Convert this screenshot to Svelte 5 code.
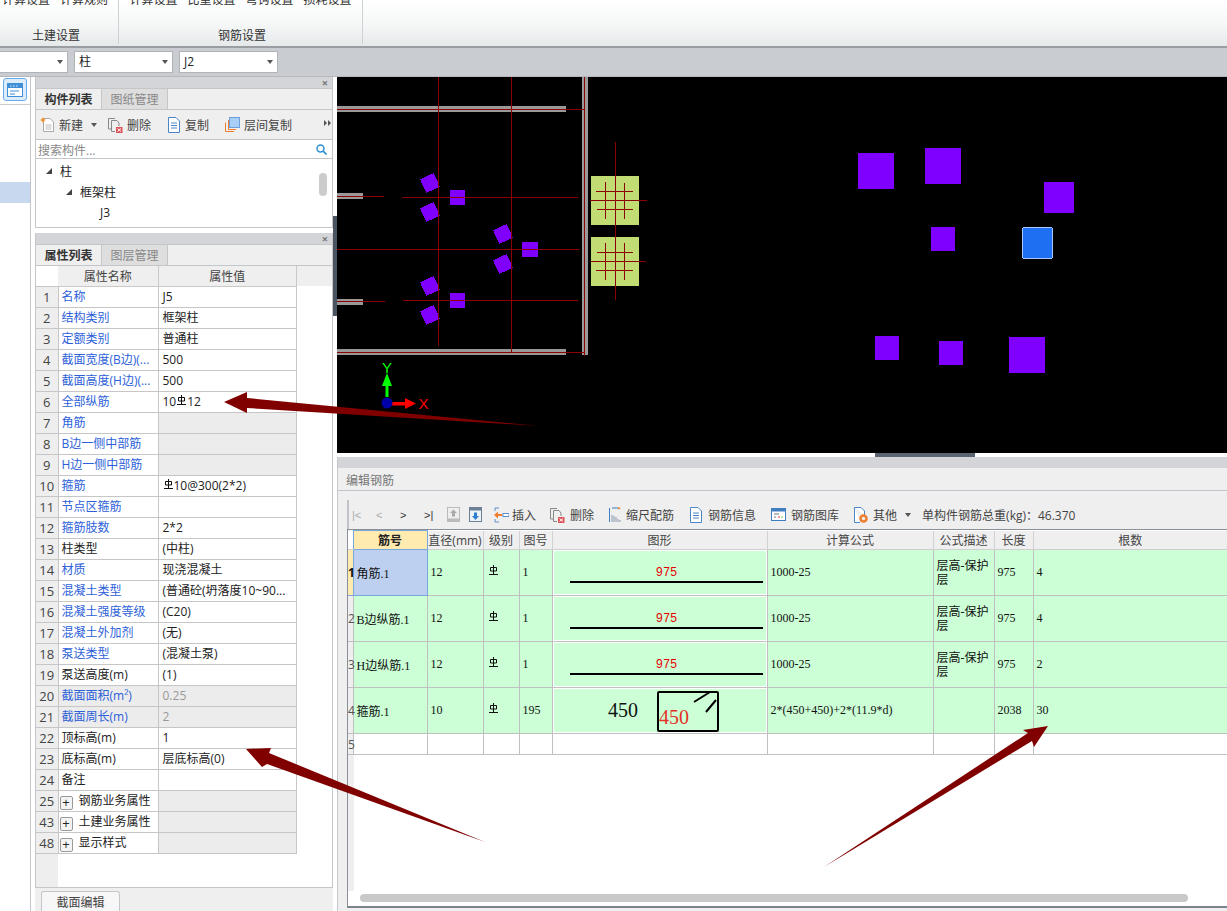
<script lang="ts">
  const propRows = [
    { n: 1, name: "名称", val: "J5", link: true },
    { n: 2, name: "结构类别", val: "框架柱", link: true },
    { n: 3, name: "定额类别", val: "普通柱", link: true },
    { n: 4, name: "截面宽度(B边)(...", val: "500", link: true },
    { n: 5, name: "截面高度(H边)(...", val: "500", link: true },
    { n: 6, name: "全部纵筋", val: "10", sym: true, after: "12", link: true },
    { n: 7, name: "角筋", val: "", link: true, grey: true },
    { n: 8, name: "B边一侧中部筋", val: "", link: true, grey: true },
    { n: 9, name: "H边一侧中部筋", val: "", link: true, grey: true },
    { n: 10, name: "箍筋", val: "", sym: true, after: "10@300(2*2)", link: true },
    { n: 11, name: "节点区箍筋", val: "", link: true },
    { n: 12, name: "箍筋肢数", val: "2*2", link: true },
    { n: 13, name: "柱类型", val: "(中柱)" },
    { n: 14, name: "材质", val: "现浇混凝土", link: true },
    { n: 15, name: "混凝土类型", val: "(普通砼(坍落度10~90...", link: true },
    { n: 16, name: "混凝土强度等级", val: "(C20)", link: true },
    { n: 17, name: "混凝土外加剂", val: "(无)", link: true },
    { n: 18, name: "泵送类型", val: "(混凝土泵)", link: true },
    { n: 19, name: "泵送高度(m)", val: "(1)" },
    { n: 20, name: "截面面积(m²)", val: "0.25", link: true, locked: true },
    { n: 21, name: "截面周长(m)", val: "2", link: true, locked: true },
    { n: 22, name: "顶标高(m)", val: "1" },
    { n: 23, name: "底标高(m)", val: "层底标高(0)" },
    { n: 24, name: "备注", val: "" },
    { n: 25, name: "钢筋业务属性", val: "", group: true, grey: true },
    { n: 43, name: "土建业务属性", val: "", group: true, grey: true },
    { n: 48, name: "显示样式", val: "", group: true, grey: true },
  ];

  const rebars = [
    { no: 1, name: "角筋.1", d: 12, code: 1, formula: "1000-25", desc: "层高-保护层", len: 975, count: 4 },
    { no: 2, name: "B边纵筋.1", d: 12, code: 1, formula: "1000-25", desc: "层高-保护层", len: 975, count: 4 },
    { no: 3, name: "H边纵筋.1", d: 12, code: 1, formula: "1000-25", desc: "层高-保护层", len: 975, count: 2 },
    { no: 4, name: "箍筋.1", d: 10, code: 195, formula: "2*(450+450)+2*(11.9*d)", desc: "", len: 2038, count: 30 },
  ];

  // drawing coordinates are relative to the canvas corner
  const columns = [[113, 113, 15, 15], [185, 165, 16, 15], [113, 216, 15, 15]];
  const tilted = [[93, 106], [93, 135], [166, 157], [166, 187], [93, 209], [93, 238]];
  const farColumns = [
    [521, 76, 36, 36], [588, 71, 36, 36], [707, 105, 30, 31], [594, 150, 24, 24],
    [538, 259, 24, 24], [602, 264, 24, 24], [672, 260, 36, 36],
  ];
  const redLines = [
    [0, 32, 247, 32], [101, 0, 101, 269], [174, 0, 174, 275], [65, 120, 241, 120],
    [0, 172, 242, 172], [66, 223, 241, 223], [0, 119, 47, 119], [0, 224, 48, 224],
    [0, 275, 247, 275], [247, 0, 247, 279], [278, 65, 278, 223], [253, 123, 310, 123], [254, 184, 309, 184],
    [259, 114, 296, 114], [260, 132, 296, 132], [268, 105, 268, 142], [287, 106, 287, 142],
    [260, 175, 296, 175], [259, 193, 296, 193], [268, 166, 268, 203], [287, 166, 287, 203],
  ];
</script>

{#snippet rebarSym()}
  <svg class="sym" width="9" height="10" viewBox="0 0 9 10">
    <path d="M4.5 0V9M1.5 2.5H7.5V6H1.5ZM0 9.5H9" fill="none" stroke="#111" stroke-width="1" />
  </svg>
{/snippet}

{#snippet caret()}
  <svg class="caret" width="6" height="4" viewBox="0 0 6 4"><path d="M0 0H6L3 4Z" fill="#555" /></svg>
{/snippet}

{#snippet docDelete()}
  <svg width="15" height="16" viewBox="0 0 15 16">
    <path d="M.5 1.5H7M.5 1.5V12H3" fill="none" stroke="#888" />
    <path d="M3.5 3.5H9L11 6V9M3.5 3.5V14.5H7" fill="none" stroke="#888" />
    <rect x="8" y="10" width="6.5" height="6" fill="#e0525a" />
    <path d="M9.5 11.5L13 14.5M13 11.5L9.5 14.5" stroke="#fff" />
  </svg>
{/snippet}

{#snippet docBlue()}
  <svg width="14" height="16" viewBox="0 0 14 16">
    <path d="M1.5 .5H9L12.5 4V15.5H1.5Z" fill="#fff" stroke="#4a86c8" />
    <path d="M4 6H10M4 8.5H10M4 11H10" stroke="#4a86c8" />
  </svg>
{/snippet}

<div class="app">
  <header class="ribbon">
    <div class="rgroup first">
      <div class="ritems"><span>计算设置</span><span>计算规则</span></div>
      <div class="rlabel">土建设置</div>
    </div>
    <div class="rgroup second">
      <div class="ritems"><span>计算设置</span><span>比重设置</span><span>弯钩设置</span><span>损耗设置</span></div>
      <div class="rlabel">钢筋设置</div>
    </div>
  </header>

  <div class="combobar">
    <div class="combo c0"><span></span>{@render caret()}</div>
    <div class="combo"><span>柱</span>{@render caret()}</div>
    <div class="combo"><span>J2</span>{@render caret()}</div>
  </div>

  <div class="main">
    <aside class="rail">
      <div class="rail-top">
        <div class="rail-btn">
          <svg width="16" height="14" viewBox="0 0 16 14">
            <rect x=".5" y=".5" width="15" height="13" fill="#fff" stroke="#3f8fd8" />
            <rect x="1" y="1" width="14" height="4" fill="#3f8fd8" />
            <path d="M3 3H4.5M6 3H7.5M9 3H10.5" stroke="#dcecfa" />
            <path d="M3 8H12M3 11H8" stroke="#3f8fd8" />
          </svg>
        </div>
      </div>
      <div class="rail-sel"></div>
    </aside>

    <div class="side">
      <section class="panel list-panel">
        <div class="panel-bar"><span class="x">×</span></div>
        <div class="tabs">
          <div class="tab on">构件列表</div>
          <div class="tab">图纸管理</div>
        </div>
        <div class="tools">
          <span class="tool new">
            <svg width="14" height="15" viewBox="0 0 14 15">
              <path d="M3.5 1.5H10L13.5 5V14.5H3.5Z" fill="#fff" stroke="#aaa" />
              <path d="M5.5 8H11.5M5.5 10H11.5M5.5 12H11.5" stroke="#bbb" />
              <path d="M3 0L4 2L6 3L4 4L3 6L2 4L0 3L2 2Z" fill="#f0902a" />
            </svg>
            新建 {@render caret()}
          </span>
          <span class="tool">{@render docDelete()}删除</span>
          <span class="tool">{@render docBlue()}复制</span>
          <span class="tool layer">
            <svg width="15" height="15" viewBox="0 0 15 15">
              <rect x="4.5" y=".5" width="10" height="10" fill="#a9cdf5" stroke="#6ba0de" />
              <path d="M3.5 3V12.5H11M.5 5.5V14.5H9" fill="none" stroke="#ee7d2e" />
            </svg>
            层间复制
          </span>
          <span class="more">
            <svg width="7" height="6" viewBox="0 0 7 6"><path d="M0 0L3 3L0 6ZM4 0L7 3L4 6Z" fill="#555" /></svg>
          </span>
        </div>
        <div class="search">
          <span>搜索构件...</span>
          <svg width="11" height="11" viewBox="0 0 11 11">
            <circle cx="4.5" cy="4.5" r="3.5" fill="none" stroke="#2f8fd0" stroke-width="1.5" />
            <path d="M7 7L10.5 10.5" stroke="#2f8fd0" stroke-width="1.7" />
          </svg>
        </div>
        <div class="tree">
          <div class="node lv0"><i class="tri"></i>柱</div>
          <div class="node lv1"><i class="tri"></i>框架柱</div>
          <div class="node lv2">J3</div>
          <div class="thumb"></div>
        </div>
      </section>

      <section class="panel prop-panel">
        <div class="panel-bar"><span class="x">×</span></div>
        <div class="tabs">
          <div class="tab on">属性列表</div>
          <div class="tab">图层管理</div>
        </div>
        <div class="prop-body">
          <table class="props">
            <colgroup><col class="pn" /><col class="pk" /><col class="pv" /></colgroup>
            <thead>
              <tr><th class="blank"></th><th>属性名称</th><th>属性值</th></tr>
            </thead>
            <tbody>
              {#each propRows as r}
                <tr class:locked={r.locked}>
                  <td class="num">{r.n}</td>
                  <td class="key" class:link={r.link}>
                    {#if r.group}<span class="plus">+</span><span class="gname">{r.name}</span>{:else}{r.name}{/if}
                  </td>
                  <td class="val" class:grey={r.grey}>{r.val}{#if r.sym}{@render rebarSym()}{r.after}{/if}</td>
                </tr>
              {/each}
            </tbody>
          </table>
        </div>
        <div class="side-foot"><div class="foot-tab">截面编辑</div></div>
      </section>
    </div>

    <div class="gutter"><div class="grip"></div></div>

    <div class="work">
      <div class="canvas">
        <svg width="890" height="376" viewBox="0 0 890 376" shape-rendering="crispEdges">
          <rect x="0" y="29" width="229" height="6" fill="#999" />
          <rect x="0" y="116" width="26" height="6" fill="#999" />
          <rect x="0" y="222" width="26" height="6" fill="#999" />
          <rect x="0" y="272" width="229" height="6" fill="#999" />
          <rect x="245" y="0" width="6" height="278" fill="#999" />
          <rect x="254" y="99" width="48" height="49" fill="#c1dc72" />
          <rect x="254" y="160" width="48" height="49" fill="#c1dc72" />
          {#each columns as c}
            <rect x={c[0]} y={c[1]} width={c[2]} height={c[3]} fill="#8000ff" />
          {/each}
          {#each tilted as t}
            <rect x={t[0] - 7.5} y={t[1] - 7.5} width="15" height="15" fill="#8000ff" transform="rotate(-25 {t[0]} {t[1]})" />
          {/each}
          {#each farColumns as c}
            <rect x={c[0]} y={c[1]} width={c[2]} height={c[3]} fill="#8000ff" />
          {/each}
          <rect x="685.5" y="150.5" width="30" height="31" rx="2" fill="#1f6ff2" stroke="#a8c8f8" />
          {#each redLines as l}
            <line x1={l[0]} y1={l[1]} x2={l[2]} y2={l[3]} stroke="#8c0000" />
          {/each}
          <g shape-rendering="auto">
            <path d="M48.5 320V309H45L50 296L55 309H51.5V320Z" fill="#00ff00" />
            <path d="M54 325V328.5H68V332L79 326.500L68 321V325Z" fill="#ff0000" />
            <circle cx="50" cy="326" r="5.500" fill="#0000a8" />
            <text x="50" y="296" class="axis" fill="#00ff00" text-anchor="middle">Y</text>
            <text x="86.500" y="332" class="axis" fill="#ff0000" text-anchor="middle">X</text>
          </g>
        </svg>
      </div>

      <div class="editor">
        <div class="splitter"><div class="split-tab"></div></div>
        <div class="editor-title">编辑钢筋</div>
        <div class="editor-body">
          <div class="etools">
            <span class="nav off">|&lt;</span>
            <span class="nav off">&lt;</span>
            <span class="nav">&gt;</span>
            <span class="nav">&gt;|</span>
            <svg class="ic-up" width="13" height="15" viewBox="0 0 13 15">
              <rect width="13" height="15" fill="#bbb" />
              <rect x="1" y="1" width="11" height="10.500" fill="#eee" />
              <path d="M6.500 2.500L10 6H8V9.500H5V6H3Z" fill="#aaa" />
            </svg>
            <svg class="ic-down" width="13" height="15" viewBox="0 0 13 15">
              <rect width="13" height="15" fill="#6b7f96" />
              <rect x="1" y="3.500" width="11" height="10.500" fill="#eef3f8" />
              <path d="M6.500 13L3 9H5V5.500H8V9H10Z" fill="#2f7fd0" />
            </svg>
            <span class="tool insert">
              <svg width="15" height="16" viewBox="0 0 15 16">
                <path d="M1 4V1H5M1 12V15H5" fill="none" stroke="#5a8fc8" />
                <path d="M0 8L4 4.500V7H8V9H4V11.500Z" fill="#ee7d2e" />
                <rect x="9" y="6.500" width="6" height="3" fill="#fff" stroke="#5a8fc8" />
              </svg>
              插入
            </span>
            <span class="tool">{@render docDelete()}删除</span>
            <span class="tool">
              <svg width="12" height="15" viewBox="0 0 12 15">
                <path d="M.5 1V15M3 1H9" stroke="#3f7fc0" fill="none" />
                <path d="M9 0V2.500L12 1.200Z" fill="#ee7d2e" />
                <path d="M3 8V15M5 9V15M7 10V15M9 12V15M11 13V15" stroke="#8899aa" />
              </svg>
              缩尺配筋
            </span>
            <span class="tool">{@render docBlue()}钢筋信息</span>
            <span class="tool">
              <svg width="15" height="13" viewBox="0 0 15 13">
                <rect x=".5" y=".5" width="14" height="12" fill="#fff" stroke="#3f7fc0" />
                <rect x="1" y="1" width="13" height="2.500" fill="#3f7fc0" />
                <path d="M3 6H8M3 9H5" stroke="#777" />
                <path d="M7 9H9" stroke="#e33" />
                <path d="M10 9H12" stroke="#7c3" />
              </svg>
              钢筋图库
            </span>
            <span class="tool">
              <svg width="14" height="16" viewBox="0 0 14 16">
                <path d="M.5 .5H7L10.500 4V8M.5 .5V15.500H6" fill="#fff" stroke="#4a86c8" />
                <circle cx="9.500" cy="11.500" r="3" fill="none" stroke="#ee7d2e" stroke-width="2.500" />
              </svg>
              其他 {@render caret()}
            </span>
            <span class="total">单构件钢筋总重(kg)：46.370</span>
          </div>

          <div class="grid-wrap">
            <table class="rebar">
              <colgroup>
                <col class="c-h" /><col class="c-name" /><col class="c-d" /><col class="c-lv" /><col class="c-code" />
                <col class="c-shape" /><col class="c-formula" /><col class="c-desc" /><col class="c-len" /><col />
              </colgroup>
              <thead>
                <tr>
                  <th class="hcorner"></th><th class="sel-h">筋号</th><th>直径(mm)</th><th>级别</th><th>图号</th>
                  <th>图形</th><th>计算公式</th><th>公式描述</th><th>长度</th><th>根数</th>
                </tr>
              </thead>
              <tbody>
                {#each rebars as b, i}
                  <tr class="data">
                    <td class="rownum" class:cur={i === 0}><span>{b.no}</span></td>
                    <td class="name" class:cell-sel={i === 0}>{b.name}</td>
                    <td>{b.d}</td>
                    <td class="lv">{@render rebarSym()}</td>
                    <td>{b.code}</td>
                    <td class="shape">
                      {#if b.code === 1}
                        <div class="bar"><span>975</span><i></i></div>
                      {:else}
                        <svg width="214" height="44" viewBox="0 0 214 44">
                          <text x="70" y="28" class="big" fill="#111" text-anchor="middle">450</text>
                          <rect x="105" y="3" width="60" height="39" rx="1" fill="none" stroke="#000" stroke-width="2" />
                          <path d="M141 13L157 3M153 23L163 11" stroke="#000" stroke-width="2" />
                          <text x="121" y="35" class="big" fill="#e43127" text-anchor="middle">450</text>
                        </svg>
                      {/if}
                    </td>
                    <td>{b.formula}</td>
                    <td class="desc">{b.desc}</td>
                    <td>{b.len}</td>
                    <td>{b.count}</td>
                  </tr>
                {/each}
                <tr class="empty">
                  <td class="rownum"><span>5</span></td><td></td><td></td><td></td><td></td><td></td><td></td><td></td><td></td><td></td>
                </tr>
              </tbody>
            </table>
            <div class="hscroll"></div>
          </div>
        </div>
      </div>
    </div>
  </div>

  <svg class="arrows" width="1227" height="911" viewBox="0 0 1227 911">
    <path d="M224 402L247 392L247 398L540 426L247 408L247 413Z" fill="#800000" />
    <path d="M246 749L271 748L269 753L485 842L267 764L262 767Z" fill="#800000" />
    <path d="M1048 726L1023 730L1028 733L824 867L1032 741L1034 747Z" fill="#800000" />
  </svg>
</div>

<style>
  :global(body) {
    margin: 0;
    background: #fff;
  }

  .app {
    position: relative;
    width: 1227px;
    height: 911px;
    overflow: hidden;
    display: flex;
    flex-direction: column;
    font-family: "Open Sans", "Noto Sans CJK SC", sans-serif;
    font-size: 12px;
    color: #222;
  }

  /* ribbon */
  .ribbon {
    height: 46px;
    flex: none;
    display: flex;
    background: linear-gradient(#fff, #f6f8f8 50%, #e6e9ea);
    border-bottom: 2px solid #9a9da2;
  }

  .rgroup {
    height: 44px;
    display: flex;
    flex-direction: column;
    align-items: center;
    box-sizing: border-box;
    border-right: 1px solid #cfd2d5;
    overflow: hidden;
  }

  .rgroup.first {
    width: 119px;
  }

  .rgroup.first .ritems {
    align-self: flex-start;
    padding-left: 2px;
  }

  .rgroup.first .rlabel {
    margin-right: 6px;
  }

  .rgroup.second {
    width: 244px;
  }

  .rgroup.second .rlabel {
    margin-left: 3px;
  }

  .ritems {
    display: flex;
    gap: 10px;
    height: 12px;
    line-height: 0;
    color: #333;
  }

  .rlabel {
    margin-top: 17px;
    line-height: 16px;
    color: #333;
  }

  .combobar {
    height: 29px;
    flex: none;
    display: flex;
    align-items: flex-start;
    gap: 6px;
    padding-top: 3px;
    box-sizing: border-box;
    background: #c9ccd1;
    border-bottom: 1px solid #b5b8bc;
  }

  .combo {
    width: 99px;
    height: 22px;
    box-sizing: border-box;
    padding: 0 4px;
    display: flex;
    align-items: center;
    justify-content: space-between;
    background: #fff;
    border: 1px solid #b0b3b7;
    line-height: 20px;
  }

  .combo.c0 {
    width: 68px;
    border-left: none;
  }

  /* main area */
  .main {
    flex: 1;
    display: flex;
    min-height: 0;
  }

  .rail {
    width: 31px;
    flex: none;
    box-sizing: border-box;
    border-right: 1px solid #c4c6ca;
    background: #fff;
  }

  .rail-top {
    height: 28px;
    box-sizing: border-box;
    padding: 1px 0 0 3px;
    border-bottom: 1px solid #c9ccd1;
  }

  .rail-btn {
    width: 24px;
    height: 23px;
    box-sizing: border-box;
    display: flex;
    align-items: center;
    justify-content: center;
    background: #dcecfa;
    border: 1px solid #66aaf0;
    border-radius: 3px;
  }

  .rail-sel {
    height: 21px;
    margin-top: 77px;
    background: #c8d9ef;
  }

  .side {
    width: 298px;
    flex: none;
    margin-left: 4px;
    display: flex;
    flex-direction: column;
    gap: 5px;
  }

  .panel {
    display: flex;
    flex-direction: column;
    box-sizing: border-box;
    border-left: 1px solid #c4c6ca;
    border-right: 1px solid #c4c6ca;
    background: #fff;
  }

  .list-panel {
    height: 151px;
    border-bottom: 1px solid #c4c6ca;
  }

  .prop-panel {
    flex: 1;
    min-height: 0;
  }

  .panel-bar {
    height: 11px;
    flex: none;
    background: #d3d5d9;
    display: flex;
    justify-content: flex-end;
    align-items: center;
    padding-right: 4px;
  }

  .x {
    font-size: 11px;
    line-height: 11px;
    font-weight: 700;
    color: #777;
  }

  .tabs {
    height: 22px;
    flex: none;
    box-sizing: border-box;
    display: flex;
    background: #efefef;
    border-top: 1px solid #c4c6ca;
    border-bottom: 1px solid #c4c6ca;
  }

  .tab {
    width: 65px;
    text-align: center;
    line-height: 22px;
    color: #888;
    background: #dedede;
    border-right: 1px solid #c4c6ca;
  }

  .tab.on {
    color: #333;
    font-weight: 700;
    background: #efefef;
  }

  .tools {
    height: 30px;
    flex: none;
    box-sizing: border-box;
    display: flex;
    align-items: center;
    gap: 16px;
    padding-left: 4px;
    background: #efefef;
    border-bottom: 1px solid #c4c6ca;
    color: #444;
    position: relative;
  }

  .tool {
    display: inline-flex;
    align-items: center;
    gap: 4px;
    white-space: nowrap;
  }

  .tool.new {
    gap: 5px;
    margin-right: -5px;
  }

  .tool.new .caret {
    margin-left: 3px;
  }

  .more {
    position: absolute;
    right: 1px;
    top: 10px;
    display: flex;
  }

  .search {
    height: 19px;
    flex: none;
    box-sizing: border-box;
    display: flex;
    align-items: center;
    justify-content: space-between;
    padding: 1px 5px 0 2px;
    border-bottom: 1px solid #c4c6ca;
    color: #888;
  }

  .tree {
    flex: 1;
    position: relative;
    padding-top: 2px;
  }

  .node {
    height: 20.500px;
    display: flex;
    align-items: center;
    color: #222;
    position: relative;
  }

  .lv0 {
    padding-left: 24px;
  }

  .lv1 {
    padding-left: 44px;
  }

  .lv2 {
    padding-left: 64px;
  }

  .tri {
    position: absolute;
    width: 0;
    height: 0;
    margin-left: -14px;
    border-left: 6px solid transparent;
    border-bottom: 6px solid #444;
  }

  .thumb {
    position: absolute;
    right: 5px;
    top: 14px;
    width: 8px;
    height: 23px;
    border-radius: 4px;
    background: #ccc;
  }

  /* property table */
  .prop-body {
    flex: 1;
    min-height: 0;
    background: linear-gradient(90deg, #eee 22px, #fff 22px);
    position: relative;
  }

  .prop-body::before {
    content: "";
    position: absolute;
    inset: 0 0 auto 22px;
    height: 20px;
    background: #efefef;
  }

  .props {
    position: relative;
    width: 261px;
    table-layout: fixed;
    border-collapse: collapse;
  }

  .pn {
    width: 22px;
  }

  .pk {
    width: 100px;
  }

  .props th {
    height: 20px;
    padding: 0;
    font-weight: 400;
    color: #444;
    background: #efefef;
    border-right: 1px solid #c9c9c9;
    border-bottom: 1px solid #c9c9c9;
  }

  .props th.blank {
    background: #fff;
    border-right: none;
    border-bottom: none;
  }

  .props td {
    height: 20px;
    padding: 0 0 0 3px;
    border: 1px solid #c6c6c6;
    border-left: none;
    white-space: nowrap;
    overflow: hidden;
    line-height: 20px;
  }

  .props td.val {
    padding-left: 4px;
  }

  .props td.num {
    padding: 0;
    text-align: center;
    background: #eee;
    color: #444;
    font-size: 13px;
  }

  .key.link {
    color: #2d5fd8;
  }

  .val.grey,
  .locked .key,
  .locked .val {
    background: #ececec;
  }

  .locked .val {
    color: #999;
  }

  .plus {
    display: inline-block;
    width: 11px;
    height: 12px;
    line-height: 11px;
    margin: 0 6px 0 -2px;
    text-align: center;
    vertical-align: -2px;
    background: #f4f4f4;
    border: 1px solid #999;
    border-radius: 2px;
    font-size: 13px;
    color: #222;
  }

  .sym {
    margin: 0 1px;
    vertical-align: 1px;
  }

  .side-foot {
    height: 24px;
    flex: none;
    box-sizing: border-box;
    background: #efefef;
    border-top: 1px solid #c4c6ca;
    margin: 0 -1px;
    padding: 3px 0 0 6px;
  }

  .foot-tab {
    width: 79px;
    height: 24px;
    box-sizing: border-box;
    text-align: center;
    line-height: 22px;
    color: #444;
    background: #f7f7f7;
    border: 1px solid #c4c6ca;
    border-bottom: none;
    border-radius: 3px 3px 0 0;
  }

  .gutter {
    width: 4px;
    flex: none;
    background: #fff;
    padding-top: 139px;
  }

  .grip {
    height: 100px;
    background: #4b5561;
  }

  /* right side */
  .work {
    flex: 1;
    min-width: 0;
    display: flex;
    flex-direction: column;
  }

  .canvas {
    height: 376px;
    flex: none;
    background: #000;
    border-bottom: 4px solid #fff;
  }

  .canvas svg {
    display: block;
  }

  .axis {
    font-family: "Liberation Sans", sans-serif;
    font-size: 15px;
  }

  .editor {
    flex: 1;
    min-height: 0;
    display: flex;
    flex-direction: column;
    background: #efefef;
    border-left: 1px solid #c4c6ca;
  }

  .splitter {
    height: 11px;
    flex: none;
    background: #d3d5d9;
    display: flex;
    justify-content: center;
  }

  .split-tab {
    width: 100px;
    height: 4px;
    margin: -4px 0 0 284px;
    background: #5a6470;
  }

  .editor-title {
    height: 23px;
    flex: none;
    box-sizing: border-box;
    padding-left: 8px;
    line-height: 25px;
    color: #777;
    font-size: 12px;
    border-bottom: 1px solid #c0c4cc;
  }

  .editor-body {
    flex: 1;
    min-height: 0;
    display: flex;
    flex-direction: column;
    margin: 9px 0 3px 9px;
    border-left: 2px solid #c0c4c8;
  }

  .etools {
    height: 29px;
    flex: none;
    display: flex;
    align-items: center;
    color: #444;
    padding-left: 3px;
  }

  .etools .tool {
    gap: 5px;
    margin-right: 15px;
  }

  .etools .tool.insert {
    gap: 3px;
    margin-left: 12px;
    margin-right: 14px;
  }

  .etools .caret {
    margin-left: 3px;
  }

  .nav {
    width: 24px;
    font-family: "Liberation Sans", sans-serif;
    font-size: 11px;
    color: #333;
  }

  .nav.off {
    color: #aaa;
  }

  .ic-up {
    margin: 0 9px 0 -1px;
  }

  .total {
    margin-left: -4px;
    color: #444;
  }

  .grid-wrap {
    flex: 1;
    min-height: 0;
    position: relative;
    margin-left: -2px;
    background: #fff linear-gradient(90deg, #efefef 6px, #fff 6px) no-repeat;
    background-size: 100% 361px;
    border-top: 1px solid #8a9098;
    border-bottom: 2px solid #7c828c;
    border-left: 1px solid #8a9098;
  }

  .rebar {
    width: 880px;
    table-layout: fixed;
    border-collapse: collapse;
    font-family: "Liberation Serif", "Noto Sans CJK SC", serif;
    font-size: 12px;
    color: #111;
  }

  .c-h {
    width: 5px;
  }

  .c-name {
    width: 74px;
  }

  .c-d {
    width: 56px;
  }

  .c-lv {
    width: 36px;
  }

  .c-code {
    width: 33px;
  }

  .c-shape {
    width: 215px;
  }

  .c-formula {
    width: 166px;
  }

  .c-desc {
    width: 61px;
  }

  .c-len {
    width: 39px;
  }

  .rebar th {
    height: 18px;
    padding: 0;
    font-family: "Open Sans", "Noto Sans CJK SC", sans-serif;
    font-weight: 400;
    color: #444;
    background: #efefef;
    border-right: 1px solid #d2d2d2;
    border-bottom: 1px solid #cfcfcf;
  }

  .rebar th.hcorner {
    background: #fff;
    border-right: none;
  }

  .rebar th.sel-h {
    font-weight: 700;
    color: #222;
    background: #ffeab0;
    border: 1px solid #79a7dc;
    border-bottom: none;
  }

  .data td {
    height: 45px;
    padding: 0 0 0 3px;
    background: #ccffd5;
    border: 1px solid #c0c0c0;
    overflow: visible;
    white-space: nowrap;
  }

  .empty td {
    height: 20px;
    padding: 0;
    border: 1px solid #c0c0c0;
  }

  .rebar td.rownum {
    padding: 0;
    background: #efefef;
    border-left: none;
    font-family: "Open Sans", sans-serif;
    color: #555;
    overflow: visible;
  }

  .rownum span {
    display: block;
    width: 6px;
  }

  .rebar td.rownum.cur {
    background: #ffeab0;
    color: #111;
    font-weight: 700;
    border: 1px solid #79a7dc;
    border-left: none;
  }

  .rebar td.name {
    padding-left: 3px;
  }

  .rebar td.cell-sel {
    background: #bdd0f0;
    border: 1px solid #79a7dc;
  }

  .rebar td.shape {
    padding: 0;
    box-shadow: inset 0 0 0 1px #fff;
  }

  .shape svg {
    display: block;
    margin: 0 auto;
  }

  .big {
    font-family: "Liberation Serif", serif;
    font-size: 20px;
  }

  .bar {
    display: flex;
    flex-direction: column;
    align-items: center;
    padding: 5px 0 0 14px;
  }

  .bar span {
    font-family: "Liberation Mono", monospace;
    color: #e60000;
    line-height: 12px;
    margin-bottom: 2px;
  }

  .bar i {
    display: block;
    width: 193px;
    height: 2px;
    background: #000;
  }

  .rebar td.lv {
    text-align: left;
    padding-left: 4px;
  }

  .rebar td.desc {
    white-space: normal;
    line-height: 14px;
    padding: 0 1px 0 3px;
  }

  .hscroll {
    position: absolute;
    left: 12px;
    right: 39px;
    bottom: 4px;
    height: 8px;
    border-radius: 4px;
    background: #c9c9c9;
  }

  .arrows {
    position: absolute;
    left: 0;
    top: 0;
    pointer-events: none;
  }
</style>
